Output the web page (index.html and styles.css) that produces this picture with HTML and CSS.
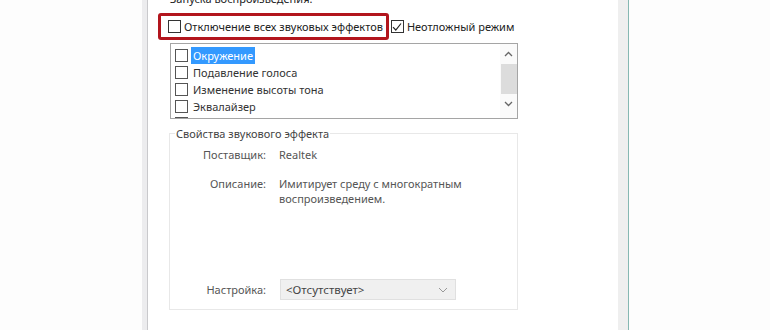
FILE: index.html
```html
<!DOCTYPE html>
<html lang="ru">
<head>
    <meta charset="UTF-8">
    <title>Звуковые эффекты</title>
    <link rel="stylesheet" href="styles.css">
</head>
<body>
    <div class="window">
        <div class="caption">Запуска воспроизведения.</div>

        <div class="toggles">
            <label class="check marked">
                <span class="box"></span>
                Отключение всех звуковых эффектов
            </label>
            <label class="check">
                <span class="box checked">
                    <svg width="10" height="10" viewBox="0 0 10 10"><path d="M1 5.2 L3.8 8 L9 1.5" fill="none" stroke="#222" stroke-width="1.2"/></svg>
                </span>
                Неотложный режим
            </label>
        </div>

        <div class="listbox">
            <ul class="effects">
                <li><span class="box"></span><span class="name selected">Окружение</span></li>
                <li><span class="box"></span><span class="name">Подавление голоса</span></li>
                <li><span class="box"></span><span class="name">Изменение высоты тона</span></li>
                <li><span class="box"></span><span class="name">Эквалайзер</span></li>
                <li><span class="box"></span></li>
            </ul>
            <div class="scrollbar">
                <svg class="arrow" width="9" height="6" viewBox="0 0 9 6"><path d="M1 5 L4.5 1.5 L8 5" fill="none" stroke="#666" stroke-width="1.3"/></svg>
                <div class="thumb"></div>
                <svg class="arrow" width="9" height="6" viewBox="0 0 9 6"><path d="M1 1 L4.5 4.5 L8 1" fill="none" stroke="#666" stroke-width="1.3"/></svg>
            </div>
        </div>

        <fieldset class="props">
            <legend>Свойства звукового эффекта</legend>
            <div class="row">
                <span class="key">Поставщик:</span>
                <span class="val">Realtek</span>
            </div>
            <div class="row">
                <span class="key">Описание:</span>
                <span class="val">Имитирует среду с многократным<br>воспроизведением.</span>
            </div>
            <div class="row setting">
                <span class="key">Настройка:</span>
                <div class="select">
                    <span>&lt;Отсутствует&gt;</span>
                    <svg width="10" height="6" viewBox="0 0 10 6"><path d="M1 1 L5 5 L9 1" fill="none" stroke="#999" stroke-width="1"/></svg>
                </div>
            </div>
        </fieldset>
    </div>
</body>
</html>
```

FILE: styles.css
```css
body {
    margin: 0;
    background-color: #fdfdfd;
    font-family: 'Noto Sans', 'DejaVu Sans', sans-serif;
    font-size: 11px;
    color: #222;
    overflow: hidden;
}
.window {
    margin-left: 142px;
    width: 460px;
    height: 330px;
    padding-left: 11px;
    background-color: #fff;
    border-left: 5px solid #ececee;
    border-right: 10px solid #efefef;
    box-shadow: inset 1px 0 0 #c9c9cc, 1px 0 0 #86b8b2;
    overflow: hidden;
}
.caption {
    margin-top: -9px;
    height: 22px;
    line-height: 15px;
    padding-left: 12px;
    color: #222;
}
.toggles {
    display: flex;
    align-items: center;
    gap: 2px;
    font-size: 11px;
}
.check {
    display: inline-flex;
    align-items: center;
    gap: 3px;
    height: 21px;
    white-space: nowrap;
}
.check.marked {
    border: 3px solid #b2151d;
    border-radius: 3px;
    padding: 0 3px 0 7px;
}
.box {
    display: inline-flex;
    align-items: center;
    justify-content: center;
    width: 11px;
    height: 11px;
    border: 1px solid #333;
    background-color: #fff;
    flex: none;
}
.listbox {
    display: flex;
    margin: 3px 0 0 12px;
    width: 346px;
    height: 74px;
    border: 1px solid #a5a5a5;
    overflow: hidden;
}
.effects {
    flex: 1;
    list-style: none;
    margin: 0;
    padding: 3px 0 0 4px;
}
.effects li {
    display: flex;
    align-items: center;
    gap: 3px;
    height: 17px;
    color: #333;
}
.effects .box {
    border-color: #555;
}
.name {
    padding: 1px 2px;
}
.name.selected {
    background-color: #3399ff;
    color: #fff;
}
.scrollbar {
    display: flex;
    flex-direction: column;
    align-items: center;
    width: 17px;
    background-color: #fafafa;
}
.scrollbar .arrow {
    margin: 7px 0;
}
.thumb {
    width: 16px;
    height: 30px;
    background-color: #dcdcdc;
}
.props {
    margin: 7px 0 0 11px;
    width: 349px;
    height: 184px;
    padding: 6px 0 0 0;
    border: 1px solid #e8e8e8;
    box-sizing: border-box;
}
.props legend {
    margin-left: 5px;
    padding: 0 1px;
    color: #444;
}
.row {
    display: flex;
    align-items: flex-start;
    line-height: 15px;
    margin-bottom: 14px;
}
.key {
    width: 96px;
    text-align: right;
    color: #555;
    flex: none;
}
.val {
    margin-left: 13px;
    color: #555;
}
.row.setting {
    align-items: center;
    margin-top: 73px;
}
.select {
    display: flex;
    align-items: center;
    justify-content: space-between;
    margin-left: 14px;
    width: 162px;
    height: 19px;
    padding: 0 7px 0 5px;
    background-color: #f0f0f0;
    border: 1px solid #e0e0e0;
    color: #444;
    font-size: 11.5px;
}
```
